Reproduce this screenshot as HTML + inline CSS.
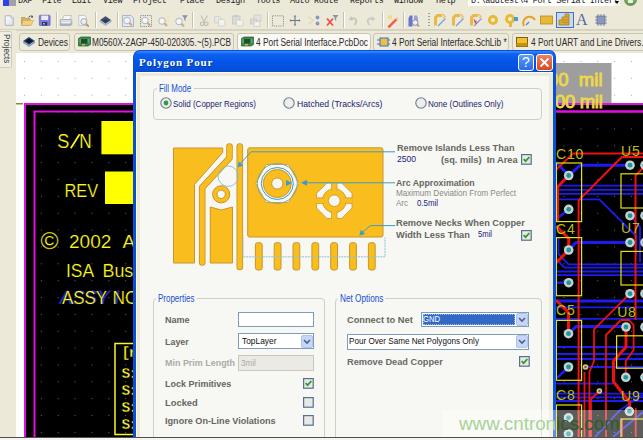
<!DOCTYPE html><html><head><meta charset="utf-8"><style>
*{margin:0;padding:0;box-sizing:border-box}
html,body{width:643px;height:440px;overflow:hidden;background:#ECE9D8;font-family:"Liberation Sans",sans-serif;position:relative}
.a{position:absolute}
.t{position:absolute;white-space:nowrap;transform-origin:0 0;line-height:1}
</style></head><body>
<div class="a" style="left:0;top:0;width:643px;height:8px;background:#ECE9D8;overflow:hidden">
<div class="a" style="left:3px;top:0;width:6px;height:6px;background:#3040E8"></div><div class="a" style="left:9px;top:0;width:7px;height:6px;background:#A0A0A8"></div>
<div class="t" style="left:18px;top:-3px;font-family:'Liberation Mono',monospace;font-size:8.5px;color:#202020;letter-spacing:-0.3px">DXP</div>
<div class="t" style="left:42px;top:-3px;font-family:'Liberation Mono',monospace;font-size:8.5px;color:#202020;letter-spacing:-0.3px">File</div>
<div class="t" style="left:72px;top:-3px;font-family:'Liberation Mono',monospace;font-size:8.5px;color:#202020;letter-spacing:-0.3px">Edit</div>
<div class="t" style="left:103px;top:-3px;font-family:'Liberation Mono',monospace;font-size:8.5px;color:#202020;letter-spacing:-0.3px">View</div>
<div class="t" style="left:133px;top:-3px;font-family:'Liberation Mono',monospace;font-size:8.5px;color:#202020;letter-spacing:-0.3px">Project</div>
<div class="t" style="left:180px;top:-3px;font-family:'Liberation Mono',monospace;font-size:8.5px;color:#202020;letter-spacing:-0.3px">Place</div>
<div class="t" style="left:216px;top:-3px;font-family:'Liberation Mono',monospace;font-size:8.5px;color:#202020;letter-spacing:-0.3px">Design</div>
<div class="t" style="left:256px;top:-3px;font-family:'Liberation Mono',monospace;font-size:8.5px;color:#202020;letter-spacing:-0.3px">Tools</div>
<div class="t" style="left:290px;top:-3px;font-family:'Liberation Mono',monospace;font-size:8.5px;color:#202020;letter-spacing:-0.3px">Auto Route</div>
<div class="t" style="left:350px;top:-3px;font-family:'Liberation Mono',monospace;font-size:8.5px;color:#202020;letter-spacing:-0.3px">Reports</div>
<div class="t" style="left:394px;top:-3px;font-family:'Liberation Mono',monospace;font-size:8.5px;color:#202020;letter-spacing:-0.3px">Window</div>
<div class="t" style="left:436px;top:-3px;font-family:'Liberation Mono',monospace;font-size:8.5px;color:#202020;letter-spacing:-0.3px">Help</div>
<div class="a" style="left:468px;top:-2px;width:146px;height:8px;background:#fff"></div><div class="a" style="left:614px;top:-2px;width:6px;height:8px;background:#F4F2EA"></div>
<div class="t" style="left:471px;top:-3px;font-family:'Liberation Mono',monospace;font-size:8.5px;color:#202020;letter-spacing:-0.35px">D:\addtest\4 Port Serial Interf</div>
<div class="a" style="left:614.5px;top:1px;width:0;height:0;border-left:2.5px solid transparent;border-right:2.5px solid transparent;border-top:3px solid #000"></div>
<div class="a" style="left:624px;top:-7px;width:13px;height:13px;border-radius:50%;background:radial-gradient(circle at 50% 30%,#B8D8A8,#6AA050 60%,#5A8A48)"></div>
<div class="a" style="left:628px;top:0;width:5px;height:3px;background:#F0F4EC;border-radius:1px"></div>
</div>
<div class="a" style="left:0;top:29px;width:643px;height:1px;background:#D5D1C0"></div>
<svg class="a" style="left:4px;top:14px" width="14" height="14" viewBox="0 0 14 14"><defs><linearGradient id="nd" x1="0" y1="0" x2="1" y2="1"><stop offset="0" stop-color="#fff"/><stop offset="1" stop-color="#D8DDE8"/></linearGradient></defs><path d="M1.2 1.8H7L9.3 4.1V11.3H1.2Z" fill="url(#nd)" stroke="#A8AEBC" stroke-width=".9"/><path d="M7 1.8V4.1H9.3" fill="#E0E4EC" stroke="#A8AEBC" stroke-width=".6"/></svg><svg class="a" style="left:20px;top:14px" width="14" height="14" viewBox="0 0 14 14"><path d="M1.5 3.5H5L6 4.5H10V11.2H1.5Z" fill="#D6B068" stroke="#B09050" stroke-width=".7"/><path d="M3.2 6.5H13.5L11.2 11.3H1.5Z" fill="#F2D282" stroke="#C8A860" stroke-width=".6"/><path d="M8.5 3.2Q10.5 .8 12.8 2.6" stroke="#505860" stroke-width="1" fill="none"/><path d="M12.2 1.2l1.2 2.4-2.5.2z" fill="#505860"/></svg><svg class="a" style="left:38px;top:14px" width="14" height="14" viewBox="0 0 14 14"><rect x="1.3" y="1.3" width="10.8" height="10.2" rx=".8" fill="#7E7EDC" stroke="#6262B0" stroke-width=".7"/><rect x="3.2" y="1.6" width="7" height="4.4" fill="#ECECF8"/><rect x="4" y="8" width="5.2" height="3.5" fill="#34346A"/><rect x="5.2" y="9" width="1.5" height="1.5" fill="#D0D0E8"/></svg><div class="a" style="left:56px;top:12px;width:1px;height:16px;background:#C5C2B2"></div><div class="a" style="left:57px;top:12px;width:1px;height:16px;background:#fff"></div><svg class="a" style="left:59px;top:14px" width="14" height="14" viewBox="0 0 14 14"><defs><linearGradient id="pr" x1="0" y1="0" x2="0" y2="1"><stop offset="0" stop-color="#E8ECF0"/><stop offset="1" stop-color="#A0A8B4"/></linearGradient></defs><path d="M3.2 5.5L5 1.6H12.4L10.8 5.5Z" fill="#FAFAFC" stroke="#A8B0BC" stroke-width=".7"/><path d="M1.2 5.5H12.8V10.2L11.8 11.4H1.2Z" fill="url(#pr)" stroke="#98A0AC" stroke-width=".7"/><rect x="2.5" y="8" width="8.5" height="1.2" fill="#F4F6F8"/></svg><svg class="a" style="left:77px;top:14px" width="14" height="14" viewBox="0 0 14 14"><path d="M1.8 1.4H7.4L9.6 3.6V11.4H1.8Z" fill="#F8F8FA" stroke="#B0B4C0" stroke-width=".7"/><circle cx="6.8" cy="7.6" r="3" fill="#E8ECF4" stroke="#9098A8" stroke-width=".8"/><path d="M8.9 9.8L11.8 12.6" stroke="#C89060" stroke-width="1.8"/></svg><div class="a" style="left:95px;top:12px;width:1px;height:16px;background:#C5C2B2"></div><div class="a" style="left:96px;top:12px;width:1px;height:16px;background:#fff"></div><svg class="a" style="left:99px;top:14px" width="14" height="14" viewBox="0 0 14 14"><path d="M1 6.2L6.5 2.2L12.2 6.2V7.8L6.5 11.6L1 7.8Z" fill="#A8B8D0" stroke="#8898B8" stroke-width=".5"/><path d="M1.6 6.1L6.5 2.6L11.6 6.1L6.5 9.6Z" fill="#2E3A50"/><path d="M3.5 6.1L6.5 4L9.6 6.1" stroke="#5A6C88" stroke-width=".8" fill="none"/></svg><div class="a" style="left:117px;top:12px;width:1px;height:16px;background:#C5C2B2"></div><div class="a" style="left:118px;top:12px;width:1px;height:16px;background:#fff"></div><svg class="a" style="left:121px;top:14px" width="14" height="14" viewBox="0 0 14 14"><path d="M1.5 1.5H10L12.5 4V12.5H1.5Z" fill="#E4E8F2" stroke="#9CA6C4" stroke-width=".8"/><circle cx="6" cy="6.5" r="3.3" fill="#F4F6FA" stroke="#A4ACBC" stroke-width=".9"/><path d="M8.3 8.8L11 11.5" stroke="#D4A884" stroke-width="2.2"/></svg><svg class="a" style="left:139px;top:14px" width="14" height="14" viewBox="0 0 14 14"><rect x="1.5" y="1.5" width="11" height="11" fill="none" stroke="#707888" stroke-width=".8" stroke-dasharray="1.2 1"/><circle cx="6" cy="6.5" r="3.3" fill="#F4F6FA" stroke="#A4ACBC" stroke-width=".9"/><path d="M8.3 8.8L11 11.5" stroke="#D4A884" stroke-width="2.2"/></svg><svg class="a" style="left:157px;top:14px" width="14" height="14" viewBox="0 0 14 14"><circle cx="5" cy="7" r="3.3" fill="#F4F6FA" stroke="#A4ACBC" stroke-width=".9"/><path d="M7.3 9.3L10 12" stroke="#D4A884" stroke-width="2.2"/><circle cx="11.2" cy="2.6" r="1.4" fill="#F0E8A0"/><circle cx="11.2" cy="6.8" r="1.4" fill="#F0E8A0"/></svg><svg class="a" style="left:174px;top:14px" width="14" height="14" viewBox="0 0 14 14"><circle cx="5" cy="7.5" r="3.3" fill="#F4F6FA" stroke="#A4ACBC" stroke-width=".9"/><path d="M7.3 9.8L10 12.5" stroke="#D4A884" stroke-width="2.2"/><path d="M8 1.2H13.8L11.6 4.2V7L10.2 6V4.2Z" fill="#8890A8"/></svg><div class="a" style="left:192px;top:12px;width:1px;height:16px;background:#C5C2B2"></div><div class="a" style="left:193px;top:12px;width:1px;height:16px;background:#fff"></div><svg class="a" style="left:198px;top:14px" width="14" height="14" viewBox="0 0 14 14"><path d="M3 1.5L6.5 8M9.5 1.5L6 8" stroke="#C4C4BC" stroke-width="1.3"/><circle cx="4.3" cy="9.8" r="1.8" fill="none" stroke="#BCBCB4" stroke-width="1.2"/><circle cx="8.3" cy="9.8" r="1.8" fill="none" stroke="#BCBCB4" stroke-width="1.2"/></svg><svg class="a" style="left:213px;top:14px" width="14" height="14" viewBox="0 0 14 14"><path d="M1.5 2.5H6.5L8 4V9H1.5Z" fill="#E6E6E2" stroke="#CECEC6" stroke-width=".8"/><path d="M5.5 5.5H10.5L12 7V12H5.5Z" fill="#F2F2EE" stroke="#CECEC6" stroke-width=".8"/></svg><svg class="a" style="left:231px;top:14px" width="14" height="14" viewBox="0 0 14 14"><rect x="1.5" y="2" width="7.5" height="8" fill="#DCDCD6" stroke="#C8C8C0" stroke-width=".8"/><rect x="3.5" y="1" width="3.5" height="2" fill="#C8C8C0"/><path d="M5.5 6H10.5L12 7.5V12H5.5Z" fill="#F2F2EE" stroke="#CECEC6" stroke-width=".8"/></svg><svg class="a" style="left:249px;top:14px" width="14" height="14" viewBox="0 0 14 14"><rect x="5" y="1" width="7" height="6" fill="#E2E2DE" stroke="#CCCCC4" stroke-width=".8"/><rect x="1.5" y="5" width="6" height="5" fill="#DADAD4" stroke="#C8C8C0" stroke-width=".8"/><rect x="5" y="7.5" width="6" height="5" fill="#F0F0EC" stroke="#CECEC6" stroke-width=".8"/></svg><div class="a" style="left:267px;top:12px;width:1px;height:16px;background:#C5C2B2"></div><div class="a" style="left:268px;top:12px;width:1px;height:16px;background:#fff"></div><svg class="a" style="left:271px;top:14px" width="14" height="14" viewBox="0 0 14 14"><rect x="1.5" y="1.8" width="11" height="10.2" fill="none" stroke="#8A8E98" stroke-width=".9" stroke-dasharray="1.3 1"/></svg><svg class="a" style="left:288px;top:14px" width="14" height="14" viewBox="0 0 14 14"><path d="M7 2V11M2.5 6.5H11.5" stroke="#6A7888" stroke-width="1.1"/><path d="M7 1l1.4 1.6H5.6zM7 12l1.4-1.6H5.6zM1.5 6.5l1.6-1.4v2.8zM12.5 6.5l-1.6-1.4v2.8z" fill="#6A7888"/></svg><svg class="a" style="left:307px;top:14px" width="14" height="14" viewBox="0 0 14 14"><path d="M1.5 2.5L6 6.5 1.5 10.5" stroke="#E0D8B0" stroke-width="1.3" fill="none"/><circle cx="10.5" cy="3.5" r="1.9" fill="#8898C0"/><circle cx="10.5" cy="9.5" r="1.9" fill="#8898C0"/></svg><svg class="a" style="left:325px;top:14px" width="14" height="14" viewBox="0 0 14 14"><path d="M2 4.5L8 11.5M8 4.5L2 11.5" stroke="#EE5048" stroke-width="1.8"/><path d="M7.5 1H13.5L11.2 4V6.8L9.8 6V4Z" fill="#8A94A8"/></svg><div class="a" style="left:343px;top:12px;width:1px;height:16px;background:#C5C2B2"></div><div class="a" style="left:344px;top:12px;width:1px;height:16px;background:#fff"></div><svg class="a" style="left:347px;top:14px" width="14" height="14" viewBox="0 0 14 14"><path d="M3.5 5C8 3 11.5 6 7.5 11" stroke="#C4C4BC" stroke-width="1.8" fill="none"/><path d="M1.5 5.5l3.5-3.5 0.8 4.8z" fill="#C4C4BC"/></svg><svg class="a" style="left:364px;top:14px" width="14" height="14" viewBox="0 0 14 14"><path d="M9.5 5C5 3 1.5 6 5.5 11" stroke="#CACAC2" stroke-width="1.8" fill="none"/><path d="M11.5 5.5L8 2l-.8 4.8z" fill="#CACAC2"/></svg><div class="a" style="left:382px;top:12px;width:1px;height:16px;background:#C5C2B2"></div><div class="a" style="left:383px;top:12px;width:1px;height:16px;background:#fff"></div><svg class="a" style="left:385px;top:14px" width="14" height="14" viewBox="0 0 14 14"><path d="M2.5 12.5L10.5 4.5l1.8 1.8-8 8z" fill="#F06048"/><path d="M10 4l2.8 2.8 .7-2.6-1-1z" fill="#F0C8A0"/><rect x="3" y="1.2" width="4" height="4" fill="#F2DC8C"/></svg><div class="a" style="left:403px;top:12px;width:1px;height:16px;background:#C5C2B2"></div><div class="a" style="left:404px;top:12px;width:1px;height:16px;background:#fff"></div><svg class="a" style="left:407px;top:14px" width="14" height="14" viewBox="0 0 14 14"><path d="M1.5 4L3 1.5H5.5V12.5H1.5Z" fill="#6A74C8"/><path d="M7 1.5H10L11 4V8H7Z" fill="#9CA4D8"/><circle cx="8.2" cy="8.6" r="2.8" fill="#EEF0F6" stroke="#707890" stroke-width=".8"/><path d="M10.2 10.6l1.8 1.8" stroke="#B09060" stroke-width="1.5"/></svg><div class="a" style="left:428px;top:13px;width:2px;height:14px;background:repeating-linear-gradient(#A0A090 0 1px,transparent 1px 3px)"></div><svg class="a" style="left:433px;top:13px" width="14" height="14" viewBox="0 0 14 14"><path d="M2.5 12.5V4.5L4.5 2.5H9" stroke="#E8B848" stroke-width="3" fill="none"/><path d="M9.5 1L12 3.5L10 5" stroke="#E8C060" stroke-width="1.3" fill="none"/><path d="M5 13L12.5 5.5" stroke="#7C9CE8" stroke-width="1.2"/></svg><svg class="a" style="left:451px;top:13px" width="14" height="14" viewBox="0 0 14 14"><path d="M2.5 12.5V4.5L4.5 2.5H9" stroke="#E8B848" stroke-width="3" fill="none"/><path d="M9.5 1L12 3.5L10 5" stroke="#E8C060" stroke-width="1.3" fill="none"/><path d="M5 13L12.5 5.5" stroke="#7C9CE8" stroke-width="1.2"/></svg><svg class="a" style="left:469px;top:13px" width="14" height="14" viewBox="0 0 14 14"><path d="M2.5 12.5V4.5L4.5 2.5H9" stroke="#E8B848" stroke-width="3" fill="none"/><path d="M9.5 1L12 3.5L10 5" stroke="#E8C060" stroke-width="1.3" fill="none"/><path d="M5 13L12.5 5.5" stroke="#7C9CE8" stroke-width="1.2"/><path d="M5 6.5l2.5 4.5M5.5 9.5l2-1.5" stroke="#E84040" stroke-width="1.2"/></svg><svg class="a" style="left:487px;top:13px" width="14" height="14" viewBox="0 0 14 14"><circle cx="6" cy="7" r="5" fill="#E8B838"/><circle cx="6" cy="7" r="2" fill="#F8F0D0"/></svg><svg class="a" style="left:504px;top:13px" width="14" height="14" viewBox="0 0 14 14"><circle cx="6" cy="6" r="5" fill="#E8B838"/><circle cx="6" cy="6" r="2" fill="#F8F0D0"/><rect x="5" y="10" width="3" height="4" fill="#E8B838"/><rect x="10" y="4" width="4" height="4" fill="#40A0D8"/></svg><svg class="a" style="left:522px;top:13px" width="14" height="14" viewBox="0 0 14 14"><path d="M2 13A6 6 0 0 1 13 7" stroke="#E8A030" stroke-width="2" fill="none"/><path d="M4 12l3-3" stroke="#5080D8" stroke-width="1.2"/></svg><svg class="a" style="left:540px;top:13px" width="14" height="14" viewBox="0 0 14 14"><rect x="0.5" y="3" width="12" height="8" fill="#E8B838" stroke="#B88820" stroke-width=".8"/></svg><div class="a" style="left:556px;top:12px;width:18px;height:16px;background:#C8D8F0;border:1px solid #4070C8"></div><svg class="a" style="left:558px;top:13px" width="14" height="14" viewBox="0 0 14 14"><path d="M1 12V7h3V4h3V1h4v11z" fill="#D8A830" stroke="#A07818" stroke-width=".7"/><path d="M4 7h7M7 4h4M4 9.5h7" stroke="#A07818" stroke-width=".5"/></svg><div class="t" style="left:576px;top:12px;font-family:'Liberation Serif',serif;font-size:16px;color:#5068A8">A</div><svg class="a" style="left:594px;top:13px" width="14" height="14" viewBox="0 0 14 14"><rect x="3" y="3" width="8" height="8" fill="#8898C0" stroke="#6070A0" stroke-width=".8"/><path d="M1 4h2M1 7h2M1 10h2M11 4h2M11 7h2M11 10h2M4 1v2M7 1v2M10 1v2M4 11v2M7 11v2M10 11v2" stroke="#9090A0" stroke-width="1"/></svg>
<div class="a" style="left:16px;top:30px;width:627px;height:1px;background:#D8D4C4"></div>
<div class="a" style="left:19px;top:33px;width:51px;height:18px;background:#EEEBDD;border:1px solid #C9C5B3;border-radius:3px"></div>
<div class="t" style="left:37.7px;top:38px;font-size:10px;color:#2A2A2A;transform:scaleX(0.8427)">Devices</div>
<svg class="a" style="left:23px;top:36px" width="12" height="11" viewBox="0 0 12 11"><path d="M0 5l6-4 6 4-6 4z" fill="#2A4878"/><path d="M0 5v2l6 4 6-4V5l-6 4z" fill="#8AA0C8"/><path d="M2 5l4-2.5 4 2.5-4 2.5z" fill="#101828"/></svg>
<div class="a" style="left:74px;top:33px;width:160px;height:18px;background:#EEEBDD;border:1px solid #C9C5B3;border-radius:3px"></div>
<div class="t" style="left:92.4px;top:38px;font-size:10px;color:#2A2A2A;transform:scaleX(0.8264)">M0560X-2AGP-450-020305.~(5).PCB</div>
<svg class="a" style="left:78px;top:36px" width="13" height="11" viewBox="0 0 13 11"><path d="M0.5 2.5L3 1H12.5V8.5L10 10H0.5Z" fill="#3C8C50" stroke="#1E5A30" stroke-width=".7"/><rect x="3" y="3" width="6.5" height="4.5" fill="#1E4E2E"/><path d="M1.5 4H3M1.5 6H3M9.5 4H11.5M9.5 6H11.5" stroke="#9AD08A" stroke-width=".8"/><rect x="4" y="8" width="3" height="1.5" fill="#D8B040"/></svg>
<div class="a" style="left:237px;top:33px;width:134px;height:18px;background:#FAF9F5;border:1px solid #C9C5B3;border-radius:3px"></div>
<div class="t" style="left:255.8px;top:38px;font-size:10px;color:#2A2A2A;transform:scaleX(0.8327)">4 Port Serial Interface.PcbDoc</div>
<svg class="a" style="left:241px;top:36px" width="13" height="11" viewBox="0 0 13 11"><path d="M0.5 2.5L3 1H12.5V8.5L10 10H0.5Z" fill="#3C8C50" stroke="#1E5A30" stroke-width=".7"/><rect x="3" y="3" width="6.5" height="4.5" fill="#1E4E2E"/><path d="M1.5 4H3M1.5 6H3M9.5 4H11.5M9.5 6H11.5" stroke="#9AD08A" stroke-width=".8"/><rect x="4" y="8" width="3" height="1.5" fill="#D8B040"/></svg>
<div class="a" style="left:373px;top:33px;width:136px;height:18px;background:#EEEBDD;border:1px solid #C9C5B3;border-radius:3px"></div>
<div class="t" style="left:392px;top:38px;font-size:10px;color:#2A2A2A;transform:scaleX(0.8385)">4 Port Serial Interface.SchLib *</div>
<svg class="a" style="left:377px;top:36px" width="13" height="12" viewBox="0 0 13 12"><rect x="3" y="2" width="8" height="8" fill="#F0C040" stroke="#3070C0"/><path d="M0 4h3M0 8h3M11 4h2M11 8h2" stroke="#3070C0"/></svg>
<div class="a" style="left:512px;top:33px;width:188px;height:18px;background:#EEEBDD;border:1px solid #C9C5B3;border-radius:3px"></div>
<div class="t" style="left:531.4px;top:38px;font-size:10px;color:#2A2A2A;transform:scaleX(0.8350)">4 Port UART and Line Drivers.:</div>
<svg class="a" style="left:516px;top:37px" width="12" height="10" viewBox="0 0 12 10"><rect x="0.5" y="0.5" width="11" height="9" fill="#F0C030" stroke="#806010"/><rect x="0.5" y="6" width="11" height="3.5" fill="#C89010"/></svg>
<div class="a" style="left:0;top:31px;width:12px;height:37px;background:#F0EEE4;border:1px solid #D0CCBC;border-left:none;border-radius:0 2px 2px 0"></div>
<div class="t" style="left:11px;top:34px;font-size:9px;color:#404040;transform:rotate(90deg) scaleX(0.9)">Projects</div>
<svg class="a" style="left:16px;top:53px" width="627" height="384" viewBox="16 53 627 384" shape-rendering="auto"><defs><pattern id="gw" x="24" y="61" width="16.86" height="16.86" patternUnits="userSpaceOnUse"><rect x="0" y="0" width="1" height="1" fill="#A8A8A8"/></pattern><pattern id="gb" x="24" y="61" width="16.86" height="16.86" patternUnits="userSpaceOnUse"><rect x="0" y="0" width="1" height="1" fill="#6A6A6A"/></pattern></defs><rect x="16" y="53" width="627" height="384" fill="#fff"/><rect x="16" y="53" width="627" height="50" fill="url(#gw)"/><rect x="24" y="103" width="619" height="334" fill="#000"/><rect x="24" y="103" width="619" height="334" fill="url(#gb)"/><rect x="16" y="103" width="7" height="1.5" fill="#8A8A30"/><path d="M25 437 V104 H643" stroke="#E010E0" stroke-width="2" fill="none"/><path d="M34.5 437 V111.5 H643" stroke="#E010E0" stroke-width="2" fill="none"/><rect x="101.4" y="121" width="40" height="33.3" fill="#FFFF00"/><rect x="105" y="171.5" width="40" height="32.5" fill="#FFFF00"/><text x="57.3" y="148.46" font-family="Liberation Sans" font-size="20.2" fill="#FFF820" stroke="#000" stroke-width="0.22" font-weight="normal" transform="translate(57.3 0) scale(0.9 1) translate(-57.3 0)" >S</text><path d="M70.8 148.3 L79.6 134.3" stroke="#FFF820" stroke-width="1.7"/><text x="79.2" y="148.46" font-family="Liberation Sans" font-size="20.2" fill="#FFF820" stroke="#000" stroke-width="0.22" font-weight="normal" transform="translate(79.2 0) scale(0.85 1) translate(-79.2 0)" >N</text><text x="64.5" y="197.10" font-family="Liberation Sans" font-size="19" fill="#FFF820" stroke="#000" stroke-width="0.22" font-weight="normal" transform="translate(64.5 0) scale(0.86 1) translate(-64.5 0)" >REV</text><text x="40.5" y="249.04" font-family="Liberation Sans" font-size="24.5" fill="#FFF820" stroke="#000" stroke-width="0.22" font-weight="normal" transform="translate(40.5 0) scale(1.0 1) translate(-40.5 0)" >©</text><text x="69" y="247.90" font-family="Liberation Sans" font-size="19" fill="#FFF820" stroke="#000" stroke-width="0.22" font-weight="normal" transform="translate(69 0) scale(1.0 1) translate(-69 0)" >2002</text><text x="122.5" y="247.90" font-family="Liberation Sans" font-size="19" fill="#FFF820" stroke="#000" stroke-width="0.22" font-weight="normal" transform="translate(122.5 0) scale(1.0 1) translate(-122.5 0)" >A</text><text x="66" y="277.06" font-family="Liberation Sans" font-size="18.8" fill="#FFF820" stroke="#000" stroke-width="0.22" font-weight="normal" transform="translate(66 0) scale(0.93 1) translate(-66 0)" >ISA</text><text x="102.5" y="277.06" font-family="Liberation Sans" font-size="18.8" fill="#FFF820" stroke="#000" stroke-width="0.22" font-weight="normal" transform="translate(102.5 0) scale(0.95 1) translate(-102.5 0)" >Bus</text><text x="58.5" y="304.5" font-family="Liberation Sans" font-size="19.5" fill="#2028E0" transform="translate(0 304) skewX(-10) translate(0 -304)" letter-spacing="-.4">ASSY I</text><text x="62" y="304.06" font-family="Liberation Sans" font-size="18.8" fill="#FFF820" stroke="#000" stroke-width="0.22" font-weight="normal" transform="translate(62 0) scale(0.9 1) translate(-62 0)" >ASSY</text><text x="112.5" y="304.06" font-family="Liberation Sans" font-size="18.8" fill="#FFF820" stroke="#000" stroke-width="0.22" font-weight="normal" transform="translate(112.5 0) scale(0.92 1) translate(-112.5 0)" >NO</text><rect x="115" y="343.5" width="40" height="91" fill="none" stroke="#FFF820" stroke-width="1.5"/><text x="121.5" y="357.0" font-family="Liberation Mono" font-weight="bold" font-size="14.5" letter-spacing="-1.8" fill="#FFF820" stroke="#000" stroke-width=".35">[r</text><text x="121.5" y="377.5" font-family="Liberation Mono" font-weight="bold" font-size="14.5" letter-spacing="-1.8" fill="#FFF820" stroke="#000" stroke-width=".35">S:</text><text x="121.5" y="395.0" font-family="Liberation Mono" font-weight="bold" font-size="14.5" letter-spacing="-1.8" fill="#FFF820" stroke="#000" stroke-width=".35">S:</text><text x="121.5" y="412.0" font-family="Liberation Mono" font-weight="bold" font-size="14.5" letter-spacing="-1.8" fill="#FFF820" stroke="#000" stroke-width=".35">S:</text><text x="121.5" y="428.8" font-family="Liberation Mono" font-weight="bold" font-size="14.5" letter-spacing="-1.8" fill="#FFF820" stroke="#000" stroke-width=".35">S:</text><rect x="540" y="63" width="71.5" height="41" fill="#9E9E9E"/><path d="M540 104 H643 M540 111.5 H643" stroke="#E010E0" stroke-width="2"/><text x="602.5" y="85.8" text-anchor="end" font-family="Liberation Sans" font-size="18.5" fill="#EED848" stroke="#EED848" stroke-width=".9">000&#160;&#160;mil</text><text x="602.5" y="107.5" text-anchor="end" font-family="Liberation Sans" font-size="18.5" fill="#EED848" stroke="#EED848" stroke-width=".9" letter-spacing="-.3">000 mil</text><path d="M556 185.7 H643" stroke="#1C1CF2" stroke-width="1.8" fill="none" stroke-linejoin="round"/><path d="M556 189.8 H643" stroke="#1C1CF2" stroke-width="1.8" fill="none" stroke-linejoin="round"/><path d="M556 193.9 H643" stroke="#1C1CF2" stroke-width="1.8" fill="none" stroke-linejoin="round"/><path d="M556 199.3 H599.4 L636 236 V255" stroke="#1C1CF2" stroke-width="1.8" fill="none" stroke-linejoin="round"/><path d="M556 162 L568.7 175.5 L580.5 165.2 H630" stroke="#1C1CF2" stroke-width="3" fill="none" stroke-linejoin="round"/><path d="M568.7 209.3 L559 217" stroke="#1C1CF2" stroke-width="2.5" fill="none" stroke-linejoin="round"/><path d="M568.7 250 L576 242.5 H630" stroke="#1C1CF2" stroke-width="3" fill="none" stroke-linejoin="round"/><path d="M630 215.7 L640 227 V262" stroke="#1C1CF2" stroke-width="1.8" fill="none" stroke-linejoin="round"/><path d="M558.5 238 V254 L568.5 264.3 H643" stroke="#1C1CF2" stroke-width="1.8" fill="none" stroke-linejoin="round"/><path d="M556 259 L564.5 267.7 H643" stroke="#1C1CF2" stroke-width="1.8" fill="none" stroke-linejoin="round"/><path d="M556 271.5 H643" stroke="#1C1CF2" stroke-width="1.8" fill="none" stroke-linejoin="round"/><path d="M556 275.2 H643" stroke="#1C1CF2" stroke-width="1.8" fill="none" stroke-linejoin="round"/><path d="M556 282.7 H568.7" stroke="#1C1CF2" stroke-width="2.5" fill="none" stroke-linejoin="round"/><path d="M556 301 H643" stroke="#1C1CF2" stroke-width="3" fill="none" stroke-linejoin="round"/><path d="M556 307.3 H643" stroke="#1C1CF2" stroke-width="1.8" fill="none" stroke-linejoin="round"/><path d="M556 318.8 H643" stroke="#1C1CF2" stroke-width="1.8" fill="none" stroke-linejoin="round"/><path d="M568.5 333.7 L576 326.5 H626" stroke="#1C1CF2" stroke-width="3" fill="none" stroke-linejoin="round"/><path d="M556 347 H643" stroke="#1C1CF2" stroke-width="1.8" fill="none" stroke-linejoin="round"/><path d="M556 354 H643" stroke="#1C1CF2" stroke-width="1.8" fill="none" stroke-linejoin="round"/><path d="M556 359 H643" stroke="#1C1CF2" stroke-width="1.8" fill="none" stroke-linejoin="round"/><path d="M568.5 367 L557 378" stroke="#1C1CF2" stroke-width="2.5" fill="none" stroke-linejoin="round"/><path d="M585.5 367 H643" stroke="#1C1CF2" stroke-width="1.8" fill="none" stroke-linejoin="round"/><path d="M556 383.6 H613" stroke="#1C1CF2" stroke-width="1.8" fill="none" stroke-linejoin="round"/><path d="M556 393.6 H643" stroke="#1C1CF2" stroke-width="1.8" fill="none" stroke-linejoin="round"/><path d="M556 397.3 H643" stroke="#1C1CF2" stroke-width="1.8" fill="none" stroke-linejoin="round"/><path d="M556 401 H643" stroke="#1C1CF2" stroke-width="1.8" fill="none" stroke-linejoin="round"/><path d="M643 395 L620 410 L595 437" stroke="#1C1CF2" stroke-width="1.8" fill="none" stroke-linejoin="round"/><path d="M643 412 L613 437" stroke="#1C1CF2" stroke-width="1.8" fill="none" stroke-linejoin="round"/><path d="M643 153.6 H572.8 L556 170" stroke="#F01010" stroke-width="2" fill="none" stroke-linejoin="round"/><path d="M643 157 H621.9 L583 196 L578.6 200.5 V437" stroke="#F01010" stroke-width="2" fill="none" stroke-linejoin="round"/><path d="M568.7 175.5 L557.5 187 V221" stroke="#F01010" stroke-width="3" fill="none" stroke-linejoin="round"/><path d="M556 226 L568.7 238.5 V250 L556 263" stroke="#F01010" stroke-width="3" fill="none" stroke-linejoin="round"/><path d="M643 168 L635.5 175.5 V320" stroke="#F01010" stroke-width="2" fill="none" stroke-linejoin="round"/><path d="M630 293.7 L594 329.4 V361 L589.4 372 V437" stroke="#F01010" stroke-width="1.8" fill="none" stroke-linejoin="round"/><path d="M556 300 L568.5 312.5 V333.7" stroke="#F01010" stroke-width="3" fill="none" stroke-linejoin="round"/><path d="M621 320 H629 L633.6 325 V350 L626.5 360" stroke="#F01010" stroke-width="1.8" fill="none" stroke-linejoin="round"/><path d="M621 320 L606 335 V437" stroke="#F01010" stroke-width="1.8" fill="none" stroke-linejoin="round"/><path d="M626 327 V347 L613.5 361 V381.8 L629.5 402 V411.3" stroke="#F01010" stroke-width="3" fill="none" stroke-linejoin="round"/><path d="M599.4 391 L591 399 V437" stroke="#F01010" stroke-width="1.8" fill="none" stroke-linejoin="round"/><path d="M584.5 372 V437" stroke="#F01010" stroke-width="1.8" fill="none" stroke-linejoin="round"/><path d="M625.8 360 V377.3" stroke="#F01010" stroke-width="1.8" fill="none" stroke-linejoin="round"/><path d="M635.7 408 V437" stroke="#F01010" stroke-width="1.8" fill="none" stroke-linejoin="round"/><path d="M622 419 V437" stroke="#F01010" stroke-width="1.8" fill="none" stroke-linejoin="round"/><rect x="556.4" y="163" width="25.2" height="58.6" fill="none" stroke="#E4E410" stroke-width="1.2"/><rect x="621" y="173.8" width="29.0" height="34.2" fill="none" stroke="#E4E410" stroke-width="1.2"/><rect x="556.4" y="237.6" width="25.2" height="58.1" fill="none" stroke="#E4E410" stroke-width="1.2"/><rect x="621" y="251.4" width="29.0" height="33.6" fill="none" stroke="#E4E410" stroke-width="1.2"/><rect x="556.4" y="320.4" width="25.2" height="59.9" fill="none" stroke="#E4E410" stroke-width="1.2"/><rect x="616.6" y="335.8" width="33.4" height="32.4" fill="none" stroke="#E4E410" stroke-width="1.2"/><rect x="556.4" y="405" width="25.2" height="40.0" fill="none" stroke="#E4E410" stroke-width="1.2"/><rect x="621" y="419" width="29.0" height="26.0" fill="none" stroke="#E4E410" stroke-width="1.2"/><text x="556" y="158.7" font-family="Liberation Sans" font-size="14" fill="#BDBD14" letter-spacing="0.8">C10</text><text x="621" y="156.2" font-family="Liberation Sans" font-size="14" fill="#BDBD14" letter-spacing="0.8">U5</text><text x="556" y="233.6" font-family="Liberation Sans" font-size="14" fill="#BDBD14" letter-spacing="0.8">C4</text><text x="621" y="233.2" font-family="Liberation Sans" font-size="14" fill="#BDBD14" letter-spacing="0.8">U7</text><text x="556" y="315.2" font-family="Liberation Sans" font-size="14" fill="#BDBD14" letter-spacing="0.8">C5</text><text x="617.2" y="317.2" font-family="Liberation Sans" font-size="14" fill="#BDBD14" letter-spacing="0.8">U8</text><text x="556" y="399.9" font-family="Liberation Sans" font-size="14" fill="#BDBD14" letter-spacing="0.8">C8</text><text x="621" y="401.2" font-family="Liberation Sans" font-size="14" fill="#BDBD14" letter-spacing="0.8">U9</text><circle cx="568.7" cy="175.5" r="4.8" fill="#C8D0D0"/><circle cx="568.7" cy="175.5" r="2.4" fill="#189898"/><circle cx="630" cy="165.2" r="4.8" fill="#C8D0D0"/><circle cx="630" cy="165.2" r="2.4" fill="#189898"/><circle cx="645" cy="165.2" r="4.8" fill="#C8D0D0"/><circle cx="645" cy="165.2" r="2.4" fill="#189898"/><circle cx="568.7" cy="209.3" r="4.8" fill="#C8D0D0"/><circle cx="568.7" cy="209.3" r="2.4" fill="#189898"/><circle cx="630" cy="215.7" r="4.8" fill="#C8D0D0"/><circle cx="630" cy="215.7" r="2.4" fill="#189898"/><circle cx="645" cy="215.7" r="4.8" fill="#C8D0D0"/><circle cx="645" cy="215.7" r="2.4" fill="#189898"/><circle cx="568.7" cy="250" r="4.8" fill="#C8D0D0"/><circle cx="568.7" cy="250" r="2.4" fill="#189898"/><circle cx="630" cy="242.5" r="4.8" fill="#C8D0D0"/><circle cx="630" cy="242.5" r="2.4" fill="#189898"/><circle cx="645" cy="242.5" r="4.8" fill="#C8D0D0"/><circle cx="645" cy="242.5" r="2.4" fill="#189898"/><circle cx="568.7" cy="282.7" r="4.8" fill="#C8D0D0"/><circle cx="568.7" cy="282.7" r="2.4" fill="#189898"/><circle cx="630" cy="293.7" r="4.8" fill="#C8D0D0"/><circle cx="630" cy="293.7" r="2.4" fill="#189898"/><circle cx="645" cy="293.7" r="4.8" fill="#C8D0D0"/><circle cx="645" cy="293.7" r="2.4" fill="#189898"/><circle cx="568.5" cy="333.7" r="4.8" fill="#C8D0D0"/><circle cx="568.5" cy="333.7" r="2.4" fill="#189898"/><circle cx="626" cy="327" r="4.8" fill="#C8D0D0"/><circle cx="626" cy="327" r="2.4" fill="#189898"/><circle cx="645" cy="327" r="4.8" fill="#C8D0D0"/><circle cx="645" cy="327" r="2.4" fill="#189898"/><circle cx="568.5" cy="367" r="4.8" fill="#C8D0D0"/><circle cx="568.5" cy="367" r="2.4" fill="#189898"/><circle cx="625.8" cy="377.3" r="4.8" fill="#C8D0D0"/><circle cx="625.8" cy="377.3" r="2.4" fill="#189898"/><circle cx="645" cy="377.3" r="4.8" fill="#C8D0D0"/><circle cx="645" cy="377.3" r="2.4" fill="#189898"/><circle cx="568.5" cy="417.8" r="4.8" fill="#C8D0D0"/><circle cx="568.5" cy="417.8" r="2.4" fill="#189898"/><circle cx="568.5" cy="434" r="4.8" fill="#C8D0D0"/><circle cx="568.5" cy="434" r="2.4" fill="#189898"/><circle cx="629.4" cy="411.3" r="4.8" fill="#C8D0D0"/><circle cx="629.4" cy="411.3" r="2.4" fill="#189898"/><circle cx="585.5" cy="367" r="2.8" fill="#D8C890"/><circle cx="585.5" cy="367" r="1.2" fill="#705828"/><circle cx="599.4" cy="391" r="2.8" fill="#D8C890"/><circle cx="599.4" cy="391" r="1.2" fill="#705828"/></svg>
<div class="a" style="left:133px;top:50px;width:423px;height:400px;background:#0A4FD8;border-radius:7px 7px 0 0"></div>
<div class="a" style="left:134px;top:51px;width:421px;height:21px;border-radius:6px 6px 0 0;background:linear-gradient(#3A8CFF 0,#0E62F0 3px,#0456E8 10px,#0550DC 18px,#0A4AC8 21px)"></div>
<div class="a" style="left:136px;top:72px;width:417px;height:380px;background:#ECE9D8;border-top:1px solid #FAFAF6;border-left:1px solid #FAFAF6"></div>
<div class="a" style="left:140px;top:76px;width:409px;height:380px;background:#F7F7F3"></div>
<div class="t" style="left:140px;top:58px;font-family:'Liberation Serif',serif;font-weight:bold;font-size:11px;letter-spacing:.87px;color:#000;opacity:.3">Polygon Pour</div>
<div class="t" style="left:139px;top:57px;font-family:'Liberation Serif',serif;font-weight:bold;font-size:11px;letter-spacing:.87px;color:#fff">Polygon Pour</div>
<div class="a" style="left:518px;top:54px;width:16px;height:17px;border:1px solid #fff;border-radius:3px;background:linear-gradient(#5A9CFF,#2A6CE8)"></div>
<div class="t" style="left:522px;top:55px;font-size:14px;color:#fff">?</div>
<div class="a" style="left:536px;top:54px;width:17px;height:17px;border:1px solid #fff;border-radius:3px;background:linear-gradient(#F08060,#D84820)"></div>
<svg class="a" style="left:536px;top:54px" width="17" height="17" viewBox="0 0 17 17"><path d="M4.5 4.5l8 8M12.5 4.5l-8 8" stroke="#fff" stroke-width="1.8"/></svg>
<svg class="a" style="left:160px;top:135px" width="240" height="140" viewBox="160 135 240 140"><path d="M173.5 148 H222.7 V152.5 L194.5 184.5 V263 H173.5 Z" fill="#F9BE1E" stroke="#C8962A" stroke-width="1" stroke-linejoin="round"/><path d="M229.5 146.5 V158 L202.2 187.5 V262.5" stroke="#C8962A" stroke-width="6.6" fill="none" stroke-linecap="round" stroke-linejoin="round"/><path d="M229.5 146.5 V158 L202.2 187.5 V262.5" stroke="#F9BE1E" stroke-width="4.8" fill="none" stroke-linecap="round" stroke-linejoin="round"/><path d="M239.8 146.5 V267" stroke="#C8962A" stroke-width="6.6" fill="none" stroke-linecap="round"/><path d="M239.8 146.5 V267" stroke="#F9BE1E" stroke-width="4.8" fill="none" stroke-linecap="round"/><circle cx="221.2" cy="194.3" r="8.6" fill="#F9BE1E" stroke="#C8962A" stroke-width="1"/><circle cx="221.2" cy="194.3" r="4.2" fill="#F7F7F3" stroke="#C8962A" stroke-width="1"/><path d="M210.3 207 L221.3 210 L232.5 207 V263 H210.3 Z" fill="#F9BE1E" stroke="#C8962A" stroke-width="1" stroke-linejoin="round"/><rect x="247.7" y="147.8" width="135.3" height="89.2" rx="2" fill="#F9BE1E" stroke="#C8962A" stroke-width="1"/><polygon points="298.8,183.5 288.5,164.5 266.1,164.5 255.8,183.5 266.1,202.5 288.5,202.5" fill="#F7F7F3" stroke="#C8962A" stroke-width=".8"/><circle cx="277.3" cy="183.5" r="20" fill="none" stroke="#7AA8A0" stroke-width="1"/><circle cx="277.3" cy="183.5" r="16" fill="#EAF4FA" stroke="#3C9CC8" stroke-width="1"/><circle cx="277.3" cy="183.5" r="14" fill="#F9BE1E" stroke="#C8962A" stroke-width="1"/><circle cx="277.3" cy="183.5" r="5.6" fill="#F7F7F3" stroke="#C8962A" stroke-width="1"/><polygon points="352.04,208.05 341.65,218.44 326.95,218.44 316.56,208.05 316.56,193.35 326.95,182.96 341.65,182.96 352.04,193.35" fill="#F7F7F3" stroke="#C8962A" stroke-width=".8"/><circle cx="334.3" cy="200.7" r="12" fill="#F9BE1E" stroke="#C8962A" stroke-width=".8"/><path d="M334.3 183 V218.4 M316.6 200.7 H352" stroke="#C8962A" stroke-width="6.2"/><path d="M334.3 182.5 V218.9 M316.1 200.7 H352.5" stroke="#F9BE1E" stroke-width="4.8"/><circle cx="334.3" cy="200.7" r="11" fill="#F9BE1E"/><circle cx="334.3" cy="200.7" r="5.8" fill="#F7F7F3" stroke="#C8962A" stroke-width=".8"/><rect x="255.4" y="242.7" width="6.8" height="27.3" rx="2.2" fill="#F9BE1E" stroke="#C8962A" stroke-width="1"/><rect x="274.2" y="242.7" width="6.8" height="27.3" rx="2.2" fill="#F9BE1E" stroke="#C8962A" stroke-width="1"/><rect x="293.0" y="242.7" width="6.8" height="27.3" rx="2.2" fill="#F9BE1E" stroke="#C8962A" stroke-width="1"/><rect x="311.9" y="242.7" width="6.8" height="27.3" rx="2.2" fill="#F9BE1E" stroke="#C8962A" stroke-width="1"/><rect x="330.7" y="242.7" width="6.8" height="27.3" rx="2.2" fill="#F9BE1E" stroke="#C8962A" stroke-width="1"/><rect x="349.6" y="242.7" width="6.8" height="27.3" rx="2.2" fill="#F9BE1E" stroke="#C8962A" stroke-width="1"/><rect x="368.4" y="242.7" width="6.8" height="27.3" rx="2.2" fill="#F9BE1E" stroke="#C8962A" stroke-width="1"/><circle cx="228.2" cy="176.2" r="10.2" fill="none" stroke="#86BCD8" stroke-width=".9"/><path d="M395 151.8 H251 L240 164" stroke="#3C9CC8" stroke-width="1" fill="none"/><path d="M237.5 167.5 l1.2-6 4.6 4z" fill="#3C9CC8"/><path d="M395 182.8 H306" stroke="#3C9CC8" stroke-width="1" fill="none"/><path d="M301 182.8 l6-3 v6z" fill="#3C9CC8"/><path d="M292 183 l-6-3 v6z" fill="#3C9CC8"/><path d="M395 225.6 H370.5 L361.5 233" stroke="#3C9CC8" stroke-width="1" fill="none"/><path d="M359.3 235.5 l1.6-5.8 4.2 4.2z" fill="#3C9CC8"/><path d="M243 237.5 V256.8 H385 V237.5" stroke="#8CC4DC" stroke-width="1" fill="none" stroke-dasharray="2 .8"/></svg>
<div class="a" style="left:153px;top:88px;width:389px;height:32px;border:1px solid #D0D0BF;border-radius:4px"></div>
<div class="a" style="left:156.5px;top:82px;width:37px;height:12px;background:#F7F7F3"></div>
<div class="t" style="left:158.5px;top:84px;font-size:10px;color:#2050D0;transform:scaleX(0.7931)">Fill Mode</div>
<svg class="a" style="left:159.5px;top:97px" width="12" height="12" viewBox="0 0 12 12"><circle cx="6" cy="6" r="5.2" fill="#EEEEEA" stroke="#6A7C98" stroke-width="1.1"/><circle cx="6" cy="6" r="2.4" fill="#2CA040"/></svg>
<div class="t" style="left:173px;top:98.5px;font-size:9.5px;color:#22226E;transform:scaleX(0.8401)">Solid (Copper Regions)</div>
<svg class="a" style="left:283px;top:97px" width="12" height="12" viewBox="0 0 12 12"><circle cx="6" cy="6" r="5.2" fill="#EEEEEA" stroke="#6A7C98" stroke-width="1.1"/></svg>
<div class="t" style="left:296.6px;top:98.5px;font-size:9.5px;color:#22226E;transform:scaleX(0.9082)">Hatched (Tracks/Arcs)</div>
<svg class="a" style="left:414.6px;top:97px" width="12" height="12" viewBox="0 0 12 12"><circle cx="6" cy="6" r="5.2" fill="#EEEEEA" stroke="#6A7C98" stroke-width="1.1"/></svg>
<div class="t" style="left:428px;top:98.5px;font-size:9.5px;color:#22226E;transform:scaleX(0.8498)">None (Outlines Only)</div>
<div class="t" style="left:396.5px;top:143.5px;font-size:9px;font-weight:bold;color:#666660;transform:scaleX(1.0168)">Remove Islands Less Than</div>
<div class="t" style="left:397px;top:154.0px;font-size:9.5px;color:#1C1C84;transform:scaleX(0.9009)">2500</div>
<div class="t" style="left:441px;top:155.8px;font-size:9px;font-weight:bold;color:#666660;transform:scaleX(1.0252)">(sq. mils)&nbsp;&nbsp;In Area</div>
<svg class="a" style="left:521px;top:153.5px" width="11" height="11" viewBox="0 0 11 11"><rect x=".6" y=".6" width="9.6" height="9.6" fill="#E8E8E4" stroke="#56708E" stroke-width="1.2"/><path d="M2.6 5.2l2 2 3.8-4.2" stroke="#2AA02A" stroke-width="1.8" fill="none"/></svg>
<div class="t" style="left:395.8px;top:178.5px;font-size:9px;font-weight:bold;color:#666660;transform:scaleX(0.9747)">Arc Approximation</div>
<div class="t" style="left:396px;top:187.9px;font-size:9.5px;color:#8A8A86;transform:scaleX(0.8512)">Maximum Deviation From Perfect</div>
<div class="t" style="left:396px;top:198.1px;font-size:9.5px;color:#8A8A86;transform:scaleX(0.8421)">Arc</div>
<div class="t" style="left:416.8px;top:198.1px;font-size:9.5px;color:#1C1C84;transform:scaleX(0.8279)">0.5mil</div>
<div class="t" style="left:396px;top:219.3px;font-size:9px;font-weight:bold;color:#666660;transform:scaleX(1.0303)">Remove Necks When Copper</div>
<div class="t" style="left:396px;top:230.9px;font-size:9px;font-weight:bold;color:#666660;transform:scaleX(1.0263)">Width Less Than</div>
<div class="t" style="left:478.2px;top:229.1px;font-size:9.5px;color:#1C1C84;transform:scaleX(0.8053)">5mil</div>
<svg class="a" style="left:521px;top:229.5px" width="11" height="11" viewBox="0 0 11 11"><rect x=".6" y=".6" width="9.6" height="9.6" fill="#E8E8E4" stroke="#56708E" stroke-width="1.2"/><path d="M2.6 5.2l2 2 3.8-4.2" stroke="#2AA02A" stroke-width="1.8" fill="none"/></svg>
<div class="a" style="left:153px;top:298px;width:172px;height:162px;border:1px solid #D0D0BF;border-radius:4px"></div>
<div class="a" style="left:156.4px;top:292px;width:40.4px;height:12px;background:#F7F7F3"></div>
<div class="t" style="left:158.4px;top:294px;font-size:10px;color:#2050D0;transform:scaleX(0.7982)">Properties</div>
<div class="t" style="left:164.6px;top:316.1px;font-size:9px;font-weight:bold;color:#666660;transform:scaleX(1.0049)">Name</div>
<div class="a" style="left:238px;top:312px;width:76px;height:15px;background:#fff;border:1px solid #7F9DB9"></div>
<div class="t" style="left:164.6px;top:337.9px;font-size:9px;font-weight:bold;color:#666660;transform:scaleX(0.9904)">Layer</div>
<div class="a" style="left:238px;top:333px;width:76px;height:16px;background:#fff;border:1px solid #7F9DB9"></div>
<div class="t" style="left:241.5px;top:336.1px;font-size:9.5px;color:#101010;transform:scaleX(0.8836)">TopLayer</div>
<svg class="a" style="left:301px;top:335px" width="12" height="13" viewBox="0 0 12 13"><rect x=".5" y=".5" width="11" height="12" rx="1.5" fill="#C6D6F8" stroke="#B0C4EC"/><path d="M3 5l3 3 3-3" stroke="#4D6185" stroke-width="1.6" fill="none"/></svg>
<div class="t" style="left:164.6px;top:359.3px;font-size:9px;font-weight:bold;color:#ACACA6;transform:scaleX(0.9933)">Min Prim Length</div>
<div class="a" style="left:238px;top:355px;width:76px;height:16px;background:#EBEAE4;border:1px solid #C9C7BA"></div>
<div class="t" style="left:241px;top:357.5px;font-size:9.5px;color:#ACACA6;transform:scaleX(0.8513)">3mil</div>
<div class="t" style="left:165.4px;top:380.1px;font-size:9px;font-weight:bold;color:#666660;transform:scaleX(0.9968)">Lock Primitives</div>
<svg class="a" style="left:302.5px;top:378.0px" width="11" height="11" viewBox="0 0 11 11"><rect x=".6" y=".6" width="9.6" height="9.6" fill="#E8E8E4" stroke="#56708E" stroke-width="1.2"/><path d="M2.6 5.2l2 2 3.8-4.2" stroke="#2AA02A" stroke-width="1.8" fill="none"/></svg>
<div class="t" style="left:165.4px;top:399.1px;font-size:9px;font-weight:bold;color:#666660;transform:scaleX(1.0413)">Locked</div>
<svg class="a" style="left:302.5px;top:396.5px" width="11" height="11" viewBox="0 0 11 11"><rect x=".6" y=".6" width="9.6" height="9.6" fill="#E8E8E4" stroke="#56708E" stroke-width="1.2"/></svg>
<div class="t" style="left:165.4px;top:417.3px;font-size:9px;font-weight:bold;color:#666660;transform:scaleX(1.0114)">Ignore On-Line Violations</div>
<svg class="a" style="left:302.5px;top:415.0px" width="11" height="11" viewBox="0 0 11 11"><rect x=".6" y=".6" width="9.6" height="9.6" fill="#E8E8E4" stroke="#56708E" stroke-width="1.2"/></svg>
<div class="a" style="left:335px;top:298px;width:207px;height:162px;border:1px solid #D0D0BF;border-radius:4px"></div>
<div class="a" style="left:338px;top:292px;width:47.4px;height:12px;background:#F7F7F3"></div>
<div class="t" style="left:340px;top:294px;font-size:10px;color:#2050D0;transform:scaleX(0.8220)">Net Options</div>
<div class="t" style="left:347px;top:315.5px;font-size:9px;font-weight:bold;color:#666660;transform:scaleX(1.0267)">Connect to Net</div>
<div class="a" style="left:420.5px;top:312px;width:108px;height:15px;background:#fff;border:1px solid #7F9DB9"></div>
<div class="a" style="left:422.5px;top:314px;width:92px;height:11px;background:#316AC5;outline:1px dotted #A0B8E8;outline-offset:-1px"></div>
<div class="t" style="left:423px;top:314.0px;font-size:9.5px;color:#fff;transform:scaleX(0.8061)">GND</div>
<svg class="a" style="left:516px;top:313px" width="12" height="13" viewBox="0 0 12 13"><rect x=".5" y=".5" width="11" height="12" rx="1.5" fill="#C6D6F8" stroke="#B0C4EC"/><path d="M3 5l3 3 3-3" stroke="#4D6185" stroke-width="1.6" fill="none"/></svg>
<div class="a" style="left:346.5px;top:333.5px;width:182px;height:16px;background:#fff;border:1px solid #7F9DB9"></div>
<div class="t" style="left:348.7px;top:335.7px;font-size:9.5px;color:#101010;transform:scaleX(0.8547)">Pour Over Same Net Polygons Only</div>
<svg class="a" style="left:516px;top:335px" width="12" height="13" viewBox="0 0 12 13"><rect x=".5" y=".5" width="11" height="12" rx="1.5" fill="#C6D6F8" stroke="#B0C4EC"/><path d="M3 5l3 3 3-3" stroke="#4D6185" stroke-width="1.6" fill="none"/></svg>
<div class="t" style="left:347px;top:357.6px;font-size:9px;font-weight:bold;color:#6A6A66;transform:scaleX(1.0245)">Remove Dead Copper</div>
<svg class="a" style="left:518.5px;top:356.0px" width="11" height="11" viewBox="0 0 11 11"><rect x=".6" y=".6" width="9.6" height="9.6" fill="#E8E8E4" stroke="#56708E" stroke-width="1.2"/><path d="M2.6 5.2l2 2 3.8-4.2" stroke="#2AA02A" stroke-width="1.8" fill="none"/></svg>
<div class="a" style="left:443px;top:410px;width:200px;height:30px;background:rgba(255,255,255,.36)"></div>
<div class="a" style="left:443px;top:400px;width:113px;height:40px;overflow:hidden"><div class="t" style="left:16px;top:14.5px;font-size:18.8px;color:#A6D49A">www.cntronics.com</div></div>
<div class="a" style="left:556px;top:400px;width:87px;height:40px;overflow:hidden"><div class="t" style="left:-97px;top:14.5px;font-size:18.8px;color:#2F5C24">www.cntronics.com</div></div>
<div class="a" style="left:0;top:437px;width:643px;height:3px;background:#F4F4F0;border-top:1px solid #505050"></div>
</body></html>
